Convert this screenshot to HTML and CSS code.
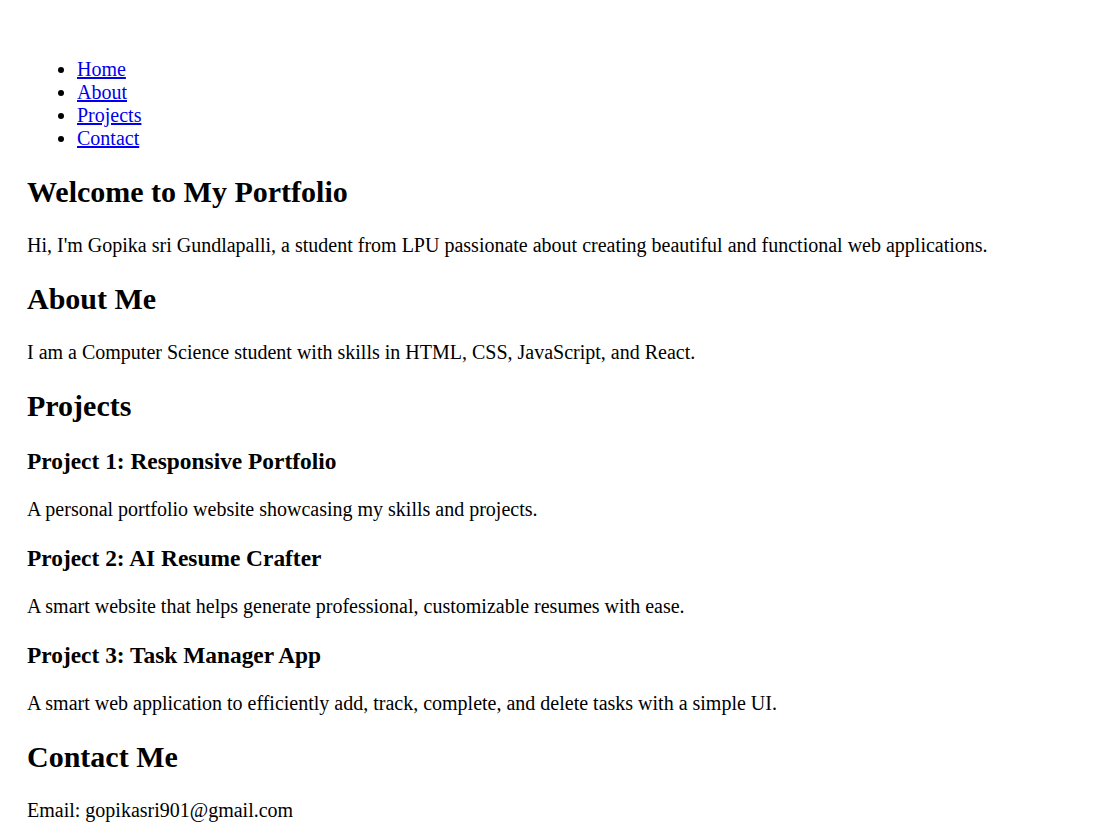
FILE: index.html
```html
<!DOCTYPE html>
<html lang="en">
<head>
<meta charset="UTF-8">
<title>Portfolio</title>
<link rel="stylesheet" href="styles.css">
</head>
<body>
<header class="site-header">
  <nav class="site-nav">
    <ul class="nav-list">
      <li><a href="#home">Home</a></li>
      <li><a href="#about">About</a></li>
      <li><a href="#projects">Projects</a></li>
      <li><a href="#contact">Contact</a></li>
    </ul>
  </nav>
</header>
<main class="content">
  <section id="home" class="section">
    <h1 class="title">Welcome to My Portfolio</h1>
    <p class="text">Hi, I'm Gopika sri Gundlapalli, a student from LPU passionate about creating beautiful and functional web applications.</p>
  </section>
  <section id="about" class="section">
    <h2 class="heading">About Me</h2>
    <p class="text">I am a Computer Science student with skills in HTML, CSS, JavaScript, and React.</p>
  </section>
  <section id="projects" class="section">
    <h2 class="heading">Projects</h2>
    <div class="project">
      <h3 class="sub">Project 1: Responsive Portfolio</h3>
      <p class="text">A personal portfolio website showcasing my skills and projects.</p>
    </div>
    <div class="project">
      <h3 class="sub">Project 2: AI Resume Crafter</h3>
      <p class="text">A smart website that helps generate professional, customizable resumes with ease.</p>
    </div>
    <div class="project">
      <h3 class="sub">Project 3: Task Manager App</h3>
      <p class="text">A smart web application to efficiently add, track, complete, and delete tasks with a simple UI.</p>
    </div>
  </section>
  <section id="contact" class="section">
    <h2 class="heading">Contact Me</h2>
    <p class="text">Email: gopikasri901@gmail.com</p>
  </section>
</main>
</body>
</html>
```
FILE: styles.css
```css
html {
  font-family: "Liberation Serif", "Times New Roman", serif;
  font-size: 20px;
  color: #000;
  background: #fff;
}
body {
  margin: 0;
  padding: 0 27px;
}
.site-header {
  padding-top: 58px;
}
.nav-list {
  margin: 0;
  padding-left: 50px;
  list-style: disc;
}
.nav-list a {
  color: #0000ee;
  text-decoration: underline;
}
.title,
.heading {
  font-size: 30px;
  font-weight: bold;
  margin: 25px 0;
}
.sub {
  font-size: 23.4px;
  font-weight: bold;
  margin: 23.4px 0;
}
.text {
  margin: 20px 0;
}
```
